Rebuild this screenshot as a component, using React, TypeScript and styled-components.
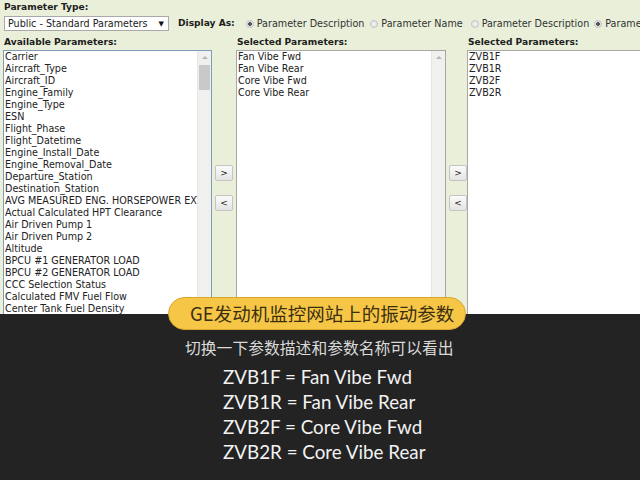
import React from 'react'
import styled, { createGlobalStyle } from 'styled-components'

const available = [
  'Carrier',
  'Aircraft_Type',
  'Aircraft_ID',
  'Engine_Family',
  'Engine_Type',
  'ESN',
  'Flight_Phase',
  'Flight_Datetime',
  'Engine_Install_Date',
  'Engine_Removal_Date',
  'Departure_Station',
  'Destination_Station',
  'AVG MEASURED ENG. HORSEPOWER EXTRACTION',
  'Actual Calculated HPT Clearance',
  'Air Driven Pump 1',
  'Air Driven Pump 2',
  'Altitude',
  'BPCU #1 GENERATOR LOAD',
  'BPCU #2 GENERATOR LOAD',
  'CCC Selection Status',
  'Calculated FMV Fuel Flow',
  'Center Tank Fuel Density',
  'Center Tank Fuel Quantity',
]

const described = ['Fan Vibe Fwd', 'Fan Vibe Rear', 'Core Vibe Fwd', 'Core Vibe Rear']
const named = ['ZVB1F', 'ZVB1R', 'ZVB2F', 'ZVB2R']

const mapping = [
  'ZVB1F = Fan Vibe Fwd',
  'ZVB1R = Fan Vibe Rear',
  'ZVB2F = Core Vibe Fwd',
  'ZVB2R = Core Vibe Rear',
]

const radios = [
  { text: 'Parameter Description', checked: true, gap: 11 },
  { text: 'Parameter Name', checked: false, gap: 6 },
  { text: 'Parameter Description', checked: false, gap: 8 },
  { text: 'Parameter Name', checked: true, gap: 5 },
]

const GlobalStyle = createGlobalStyle`
  html, body {
    margin: 0;
    padding: 0;
    width: 640px;
    height: 480px;
    overflow: hidden;
    background: #232323;
  }
`

const Page = styled.div`
  width: 640px;
  height: 480px;
  display: flex;
  flex-direction: column;
  overflow: hidden;
`

const Form = styled.section`
  height: 314px;
  flex-shrink: 0;
  overflow: hidden;
  background: #e9efd9;
  font-family: 'DejaVu Sans', Verdana, sans-serif;
  font-size: 9.6px;
  color: #222;
  padding: 2px 0 0 4px;
  box-sizing: border-box;
`

const Label = styled.div`
  flex-shrink: 0;
  font-weight: bold;
  font-size: 9.1px;
  line-height: 11px;
  color: #1d1d1d;
  white-space: nowrap;
`

const OptionsRow = styled.div`
  display: flex;
  align-items: center;
  margin-top: 3px;
  height: 15px;
  white-space: nowrap;
`

const Dropdown = styled.div`
  flex-shrink: 0;
  width: 165px;
  height: 15px;
  box-sizing: border-box;
  border: 1px solid #a9a9a9;
  background: #fff;
  display: flex;
  align-items: center;
  justify-content: space-between;
  padding: 0 4px 0 3px;
  margin-right: 9px;
  font-size: 9.6px;
`

const Arrow = styled.span`
  font-size: 7px;
  color: #111;
`

const RadioLabel = styled.label<{ $gap: number }>`
  flex-shrink: 0;
  display: flex;
  align-items: center;
  margin-left: ${(p) => p.$gap}px;
  color: #333;
`

const RadioDot = styled.span<{ $checked?: boolean }>`
  width: 8px;
  height: 8px;
  border-radius: 50%;
  border: 1px solid #c2c2c2;
  background: ${(p) =>
    p.$checked
      ? 'radial-gradient(circle, #555 0 1.6px, #e6e6e6 2.2px)'
      : 'radial-gradient(circle, #f4f4f4, #dcdcdc)'};
  margin-right: 3px;
  box-sizing: border-box;
`

const Columns = styled.div`
  display: flex;
  margin-top: 6px;
  margin-left: -1px;
`

const Column = styled.div<{ $width: number }>`
  width: ${(p) => p.$width}px;
  flex-shrink: 0;
  display: flex;
  flex-direction: column;
`

const ColumnTitle = styled(Label)`
  padding-left: 1px;
  margin-bottom: 2px;
`

const ListBox = styled.div<{ $blue?: boolean }>`
  height: 290px;
  border: 1px solid ${(p) => (p.$blue ? '#7f9db9' : '#a7a7a7')};
  background: #fff;
  display: flex;
  overflow: hidden;
`

const Items = styled.div`
  flex: 1;
  overflow: hidden;
  padding: 0 0 0 1px;
`

const Item = styled.div`
  height: 12px;
  line-height: 11px;
  white-space: nowrap;
  font-size: 9.6px;
  color: #222;
`

const Track = styled.div`
  width: 13px;
  flex-shrink: 0;
  background: #f0f0ee;
  border-left: 1px solid #e6e6e6;
  display: flex;
  flex-direction: column;
  align-items: center;
`

const UpArrow = styled.div`
  margin-top: 5px;
  width: 0;
  height: 0;
  border-left: 3px solid transparent;
  border-right: 3px solid transparent;
  border-bottom: 3px solid #b5b5b5;
`

const Thumb = styled.div`
  margin-top: 6px;
  width: 11px;
  height: 25px;
  background: #c9c9c9;
`

const Mover = styled.div<{ $width: number; $align: string }>`
  width: ${(p) => p.$width}px;
  flex-shrink: 0;
  display: flex;
  flex-direction: column;
  align-items: ${(p) => p.$align};
  padding-top: 128px;
  gap: 14px;
`

const MoveButton = styled.div`
  width: 18px;
  height: 16px;
  box-sizing: border-box;
  border: 1px solid #c4c4c4;
  border-radius: 2px;
  background: linear-gradient(#fbfbfb, #e4e4e4);
  display: flex;
  align-items: center;
  justify-content: center;
  font-size: 9px;
  color: #222;
`

const Caption = styled.section`
  flex: 1;
  background: #232323;
  display: flex;
  flex-direction: column;
  align-items: flex-start;
`

const Pill = styled.div`
  position: relative;
  margin: -17px 0 0 168px;
  width: 298px;
  height: 33px;
  box-sizing: border-box;
  border-radius: 17px;
  border: 1px solid #d9a62d;
  background: #f6c646;
  color: #3b2f10;
  font-family: 'Noto Sans CJK SC', 'Noto Sans', sans-serif;
  font-size: 18.5px;
  line-height: 31px;
  padding-left: 21px;
  white-space: nowrap;
`

const Subtitle = styled.div`
  margin: 7px 0 0 185px;
  font-family: 'Noto Sans CJK SC', sans-serif;
  font-size: 15.8px;
  line-height: 22px;
  color: #d9d9d9;
  white-space: nowrap;
`

const Mapping = styled.div`
  margin: 5px 0 0 223px;
  font-family: Lato, 'Open Sans', sans-serif;
  font-size: 18.8px;
  line-height: 25px;
  color: #f2f2f2;
  white-space: nowrap;
`

const App = () => {
  return (
    <>
      <GlobalStyle />
      <Page>
        <Form>
          <Label>Parameter Type:</Label>
          <OptionsRow>
            <Dropdown>
              Public - Standard Parameters <Arrow>▼</Arrow>
            </Dropdown>
            <Label>Display As:</Label>
            {radios.map((r, i) => (
              <RadioLabel $gap={r.gap} key={i}>
                <RadioDot $checked={r.checked} />
                {r.text}
              </RadioLabel>
            ))}
          </OptionsRow>
          <Columns>
            <Column $width={209}>
              <ColumnTitle>Available Parameters:</ColumnTitle>
              <ListBox $blue>
                <Items>
                  {available.map((a) => (
                    <Item key={a}>{a}</Item>
                  ))}
                </Items>
                <Track>
                  <UpArrow />
                  <Thumb />
                </Track>
              </ListBox>
            </Column>
            <Mover $width={24} $align='center'>
              <MoveButton>&gt;</MoveButton>
              <MoveButton>&lt;</MoveButton>
            </Mover>
            <Column $width={210}>
              <ColumnTitle>Selected Parameters:</ColumnTitle>
              <ListBox>
                <Items>
                  {described.map((d) => (
                    <Item key={d}>{d}</Item>
                  ))}
                </Items>
                <Track>
                  <UpArrow />
                </Track>
              </ListBox>
            </Column>
            <Mover $width={21} $align='flex-end'>
              <MoveButton>&gt;</MoveButton>
              <MoveButton>&lt;</MoveButton>
            </Mover>
            <Column $width={210}>
              <ColumnTitle>Selected Parameters:</ColumnTitle>
              <ListBox>
                <Items>
                  {named.map((n) => (
                    <Item key={n}>{n}</Item>
                  ))}
                </Items>
              </ListBox>
            </Column>
          </Columns>
        </Form>
        <Caption>
          <Pill>GE发动机监控网站上的振动参数</Pill>
          <Subtitle>切换一下参数描述和参数名称可以看出</Subtitle>
          <Mapping>
            {mapping.map((m) => (
              <div key={m}>{m}</div>
            ))}
          </Mapping>
        </Caption>
      </Page>
    </>
  )
}

export default App
